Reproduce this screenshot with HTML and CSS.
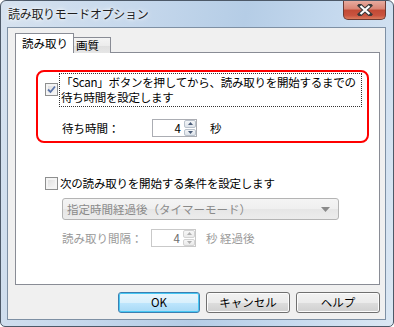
FILE: index.html
```html
<!DOCTYPE html>
<html lang="ja">
<head>
<meta charset="utf-8">
<title>読み取りモードオプション</title>
<link rel="stylesheet" href="styles.css">
</head>
<body>
<div class="window">
  <div class="titlebar">
    <span class="title">読み取りモードオプション</span>
    <div class="close">
      <svg width="16" height="12" viewBox="0 0 16 12"><path d="M3 1.5 L13 10.5 M13 1.5 L3 10.5" stroke="#3a3a3a" stroke-width="4.2" stroke-linecap="square" fill="none"/><path d="M3.5 2 L12.5 10 M12.5 2 L3.5 10" stroke="#ffffff" stroke-width="2.2" fill="none"/></svg>
    </div>
  </div>
  <div class="client">
    <div class="tabs">
      <div class="tab active">読み取り</div>
      <div class="tab">画質</div>
    </div>
    <div class="panel">
      <div class="highlight">
        <div class="check-row">
          <span class="checkbox">
            <svg width="9" height="9" viewBox="0 0 9 9"><path d="M1 4.5 L3.5 7 L8 1.5" stroke="#5a73a8" stroke-width="1.8" fill="none"/></svg>
          </span>
          <span class="focus">「Scan」ボタンを押してから、読み取りを開始するまでの<br>待ち時間を設定します</span>
        </div>
        <div class="field-row wait">
          <span class="label">待ち時間：</span>
          <div class="spin">
            <span class="val">4</span>
            <div class="arrows">
              <span class="arrow"><svg width="5" height="3" viewBox="0 0 5 3"><path d="M0 3 L2.5 0 L5 3Z" fill="#4a5d7a"/></svg></span>
              <span class="arrow"><svg width="5" height="3" viewBox="0 0 5 3"><path d="M0 0 L2.5 3 L5 0Z" fill="#4a5d7a"/></svg></span>
            </div>
          </div>
          <span class="unit">秒</span>
        </div>
      </div>
      <div class="check-row second">
        <span class="checkbox"></span>
        <span class="text">次の読み取りを開始する条件を設定します</span>
      </div>
      <div class="select">
        <span>指定時間経過後（タイマーモード）</span>
        <svg width="9" height="5" viewBox="0 0 9 5"><path d="M0 0 L9 0 L4.5 5Z" fill="#8a8a8a"/></svg>
      </div>
      <div class="field-row interval">
        <span class="label">読み取り間隔：</span>
        <div class="spin disabled">
          <span class="val">4</span>
          <div class="arrows">
            <span class="arrow"><svg width="5" height="3" viewBox="0 0 5 3"><path d="M0 3 L2.5 0 L5 3Z" fill="#b0b0b0"/></svg></span>
            <span class="arrow"><svg width="5" height="3" viewBox="0 0 5 3"><path d="M0 0 L2.5 3 L5 0Z" fill="#b0b0b0"/></svg></span>
          </div>
        </div>
        <span class="unit">秒 経過後</span>
      </div>
    </div>
    <div class="buttons">
      <button class="btn default">OK</button>
      <button class="btn">キャンセル</button>
      <button class="btn">ヘルプ</button>
    </div>
  </div>
</div>
</body>
</html>
```
FILE: styles.css
```css
* { box-sizing: border-box; }
html, body { margin: 0; padding: 0; }
body {
  width: 394px;
  height: 327px;
  overflow: hidden;
  background: #ffffff;
  font-family: "Noto Sans CJK JP", "Noto Sans", sans-serif;
  font-size: 11.5px;
  color: #000;
}
.window {
  width: 394px;
  height: 327px;
  border: 1px solid #4d5968;
  border-radius: 6px 6px 5px 5px;
  background: linear-gradient(100deg, #d6e2ef 0%, #c6d8ec 30%, #b5cde6 55%, #c5d9ee 75%, #dbe7f3 100%);
  display: flex;
  flex-direction: column;
}
.titlebar {
  height: 26px;
  display: flex;
  justify-content: space-between;
  align-items: flex-start;
  padding-left: 7px;
}
.title {
  font-size: 12px;
  line-height: 26px;
  letter-spacing: -0.3px;
  color: #1e1e1e;
  text-shadow: 0 0 6px #ffffff, 0 0 3px #ffffff;
}
.close {
  width: 43px;
  height: 19px;
  margin-right: 7px;
  border: 1px solid #6b3a33;
  border-top: none;
  border-radius: 0 0 5px 5px;
  background: linear-gradient(#e7ab9f 0%, #d98473 45%, #c24a35 50%, #c9533f 80%, #dc7c5e 100%);
  display: flex;
  align-items: center;
  justify-content: center;
}
.client {
  flex: 1;
  margin: 0 7px 6px 6px;
  border: 1px solid #7e90a4;
  background: #f0f0f0;
  padding: 5px 5px 6px 7px;
  display: flex;
  flex-direction: column;
}
.tabs {
  display: flex;
  align-items: flex-end;
  height: 20px;
  margin-bottom: -1px;
  position: relative;
  z-index: 1;
}
.tab {
  height: 16px;
  width: 38px;
  margin-left: -1px;
  border: 1px solid #898c95;
  border-bottom: none;
  background: linear-gradient(#f4f4f4 0%, #ececec 50%, #dfdfdf 51%, #e6e6e6 100%);
  font-size: 11.5px;
  line-height: 14px;
  padding-left: 2px;
}
.tab.active {
  height: 20px;
  width: 59px;
  margin-left: 0;
  background: #ffffff;
  line-height: 18px;
  padding-left: 6px;
}
.panel {
  flex: 1;
  border: 1px solid #898c95;
  background: #ffffff;
  padding: 17px 0 0 20px;
  display: flex;
  flex-direction: column;
  align-items: flex-start;
}
.highlight {
  width: 333px;
  height: 73px;
  border: 2px solid #ff0000;
  border-radius: 8px;
  padding: 1px 0 0 7px;
}
.check-row {
  display: flex;
  align-items: flex-start;
}
.checkbox {
  width: 13px;
  height: 13px;
  margin-top: 10px;
  border: 1px solid #8e8f8f;
  background: linear-gradient(135deg, #dcdcdc, #fafafa);
  box-shadow: inset 0 0 0 2px #f4f4f4;
  display: flex;
  align-items: center;
  justify-content: center;
  flex: none;
}
.focus {
  margin-left: 1px;
  width: 303px;
  border: 1px dotted #333;
  padding: 1px 0 1px 1px;
  line-height: 15px;
  white-space: nowrap;
  letter-spacing: -0.25px;
}
.field-row {
  display: flex;
  align-items: center;
}
.label {
  width: 90px;
}
.wait {
  margin-top: 12px;
  padding-left: 17px;
}
.spin {
  width: 45px;
  height: 18px;
  border: 1px solid #abadb3;
  background: #fff;
  display: flex;
  justify-content: flex-end;
  align-items: stretch;
}
.val {
  line-height: 16px;
  padding-right: 3px;
}
.arrows {
  width: 12px;
  display: flex;
  flex-direction: column;
  gap: 1px;
}
.arrow {
  flex: 1;
  border: 1px solid #b9c2cc;
  border-radius: 2px;
  background: linear-gradient(#f4f6f8, #dde3ea);
  display: flex;
  align-items: center;
  justify-content: center;
}
.unit {
  margin-left: 13px;
}
.second {
  margin-top: 33px;
  margin-left: 9px;
  align-items: center;
}
.second .checkbox {
  margin-top: 0;
}
.second .text {
  margin-left: 2px;
  line-height: 15px;
  letter-spacing: -0.2px;
}
.select {
  margin-top: 7px;
  margin-left: 26px;
  width: 277px;
  height: 22px;
  border: 1px solid #b4b4b4;
  border-radius: 3px;
  background: linear-gradient(#f4f4f4 0%, #efefef 50%, #e6e6e6 51%, #ececec 100%);
  color: #8a8a8a;
  display: flex;
  align-items: center;
  justify-content: space-between;
  padding: 0 8px 0 4px;
}
.interval {
  margin-top: 9px;
  margin-left: 26px;
  color: #9a9a9a;
}
.interval .label {
  width: 89px;
}
.spin.disabled {
  border-color: #c9c9c9;
}
.spin.disabled .val { color: #6d6d6d; }
.spin.disabled .arrow {
  border-color: #d3d3d3;
  background: linear-gradient(#f7f7f7, #eaeaea);
}
.interval .unit {
  margin-left: 10px;
}
.buttons {
  display: flex;
  justify-content: flex-end;
  gap: 6px;
  margin-top: 7px;
}
.btn {
  width: 84px;
  height: 21px;
  font-family: "Noto Sans CJK JP", "Noto Sans", sans-serif;
  font-size: 11.5px;
  font-weight: normal;
  color: #000;
  border: 1px solid #707070;
  border-radius: 3px;
  background: linear-gradient(#f2f2f2 0%, #ebebeb 50%, #dddddd 51%, #cfcfcf 100%);
  box-shadow: inset 0 0 0 1px #fcfcfc;
  padding: 0;
  line-height: 19px;
}
.btn.default {
  width: 82px;
  border-color: #3c7fb1;
  background: linear-gradient(#eaf6fd 0%, #d9f0fc 50%, #bee6fd 51%, #a7d9f5 100%);
  box-shadow: inset 0 0 0 1px #48c8f4;
}
```
